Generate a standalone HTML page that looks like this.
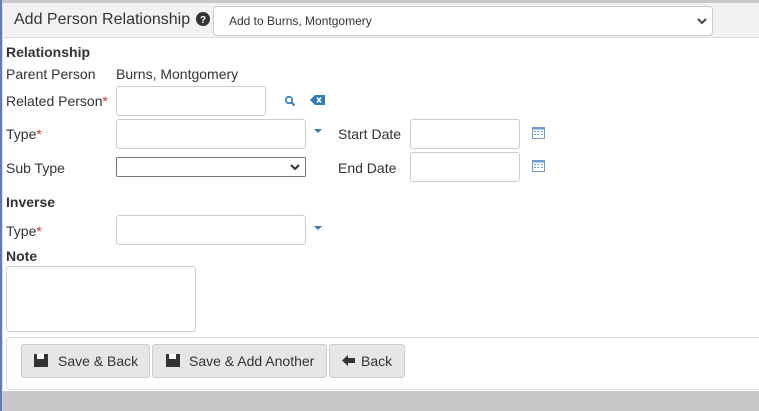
<!DOCTYPE html>
<html><head><style>
*{box-sizing:border-box}
body{margin:0;width:759px;height:411px;background:#c8c8c8;font-family:"Liberation Sans",sans-serif;font-size:14px;color:#333;position:relative;overflow:hidden}
.panel{position:absolute;left:2px;top:3px;width:757px;height:388px;background:#fff;border-left:1px solid #ddd}
.leftbar{position:absolute;left:0;top:0;width:2px;height:411px;background:#5b7fb5}
.hdr{position:absolute;left:0;top:0;width:757px;height:35px;background:#f2f2f2;border-bottom:1px solid #ddd}
.t{position:absolute;white-space:nowrap}
.inp{position:absolute;border:1px solid #ccc;border-radius:3px;background:#fff}
.req{color:#c0392b}
b{font-weight:bold}
.btn{position:absolute;top:344px;height:34px;background:#e6e6e6;border:1px solid #ccc;border-radius:3px;font-size:14px;padding:0;line-height:33px}
</style></head><body>
<div class="leftbar"></div>
<div class="panel">
<div class="hdr">
<div class="t" style="left:11px;top:8px;font-size:16px;color:#333">Add Person Relationship</div>
<svg style="position:absolute;left:193px;top:9px" width="14" height="14" viewBox="0 0 14 14"><circle cx="7" cy="7" r="7" fill="#333"/><text x="7" y="11" font-size="10" font-weight="bold" fill="#fff" text-anchor="middle" font-family="Liberation Sans">?</text></svg>
<div class="inp" style="left:210px;top:3px;width:500px;height:30px;border-radius:4px"></div>
<div class="t" style="left:226px;top:11px;font-size:12px">Add to Burns, Montgomery</div>
<svg style="position:absolute;left:694px;top:15px" width="10" height="7" viewBox="0 0 10 7"><path d="M1 1L5 5L9 1" stroke="#444" stroke-width="2" fill="none"/></svg>
</div>
</div>
<div class="t" style="left:6px;top:44px"><b>Relationship</b></div>
<div class="t" style="left:6px;top:66px">Parent Person</div>
<div class="t" style="left:116px;top:66px">Burns, Montgomery</div>
<div class="t" style="left:6px;top:93px">Related Person<span class="req">*</span></div>
<div class="inp" style="left:116px;top:86px;width:150px;height:30px"></div>
<svg style="position:absolute;left:284px;top:95px" width="12" height="12" viewBox="0 0 12 12"><circle cx="5" cy="5" r="3.3" stroke="#337ab7" stroke-width="1.6" fill="none"/><path d="M7.5 7.5L10.5 10.5" stroke="#337ab7" stroke-width="2"/></svg>
<svg style="position:absolute;left:310px;top:95px" width="15" height="10" viewBox="0 0 15 10"><path d="M0 5L5 0H15V10H5Z" fill="#337ab7"/><path d="M7 2.5L11 7.5M11 2.5L7 7.5" stroke="#fff" stroke-width="1.5"/></svg>
<div class="t" style="left:6px;top:126px">Type<span class="req">*</span></div>
<div class="inp" style="left:116px;top:119px;width:190px;height:30px"></div>
<svg style="position:absolute;left:314px;top:129px" width="8" height="5"><path d="M0 0H8L4 4Z" fill="#337ab7"/></svg>
<div class="t" style="left:338px;top:126px">Start Date</div>
<div class="inp" style="left:410px;top:119px;width:110px;height:30px"></div>
<svg style="position:absolute;left:532px;top:126px" width="13" height="13" viewBox="0 0 13 13"><rect x="0.5" y="1.5" width="12" height="11" fill="none" stroke="#6d9bd0"/><rect x="0.5" y="1.5" width="12" height="2" fill="#6d9bd0"/><g fill="#6d9bd0"><rect x="2" y="5" width="2" height="1"/><rect x="5.5" y="5" width="2" height="1"/><rect x="9" y="5" width="2" height="1"/><rect x="2" y="8" width="2" height="1"/><rect x="5.5" y="8" width="2" height="1"/><rect x="9" y="8" width="2" height="1"/></g></svg>
<div class="t" style="left:6px;top:160px">Sub Type</div>
<div class="inp" style="left:116px;top:157px;width:190px;height:20px;border-color:#767676;border-radius:2px"></div>
<svg style="position:absolute;left:290px;top:164px" width="10" height="7" viewBox="0 0 10 7"><path d="M1 1L5 5L9 1" stroke="#333" stroke-width="2" fill="none"/></svg>
<div class="t" style="left:338px;top:160px">End Date</div>
<div class="inp" style="left:410px;top:152px;width:110px;height:30px"></div>
<svg style="position:absolute;left:532px;top:159px" width="13" height="13" viewBox="0 0 13 13"><rect x="0.5" y="1.5" width="12" height="11" fill="none" stroke="#6d9bd0"/><rect x="0.5" y="1.5" width="12" height="2" fill="#6d9bd0"/><g fill="#6d9bd0"><rect x="2" y="5" width="2" height="1"/><rect x="5.5" y="5" width="2" height="1"/><rect x="9" y="5" width="2" height="1"/><rect x="2" y="8" width="2" height="1"/><rect x="5.5" y="8" width="2" height="1"/><rect x="9" y="8" width="2" height="1"/></g></svg>
<div class="t" style="left:6px;top:194px"><b>Inverse</b></div>
<div class="t" style="left:6px;top:223px">Type<span class="req">*</span></div>
<div class="inp" style="left:116px;top:215px;width:190px;height:30px"></div>
<svg style="position:absolute;left:314px;top:226px" width="8" height="5"><path d="M0 0H8L4 4Z" fill="#337ab7"/></svg>
<div class="t" style="left:6px;top:248px"><b>Note</b></div>
<div class="inp" style="left:6px;top:266px;width:190px;height:66px"></div>
<div style="position:absolute;left:6px;top:337px;width:760px;height:53px;border:1px solid #ddd;border-radius:4px;background:#fff"></div>
<div class="btn" style="left:21px;width:129px"><span style="position:absolute;left:12px;top:9px;width:14px;height:13px;background:#333"></span><span style="position:absolute;left:15px;top:9px;width:7px;height:5px;background:#fff"></span><span class="t" style="left:36px;top:0">Save &amp; Back</span></div>
<div class="btn" style="left:152px;width:175px"><span style="position:absolute;left:13px;top:9px;width:14px;height:13px;background:#333"></span><span style="position:absolute;left:16px;top:9px;width:7px;height:5px;background:#fff"></span><span class="t" style="left:36px;top:0">Save &amp; Add Another</span></div>
<div class="btn" style="left:329px;width:76px"><svg style="position:absolute;left:12px;top:10px" width="13" height="11" viewBox="0 0 13 11"><path d="M0 5.5L6 0V3H13V8H6V11Z" fill="#333"/></svg><span class="t" style="left:31px;top:0">Back</span></div>
</body></html>
